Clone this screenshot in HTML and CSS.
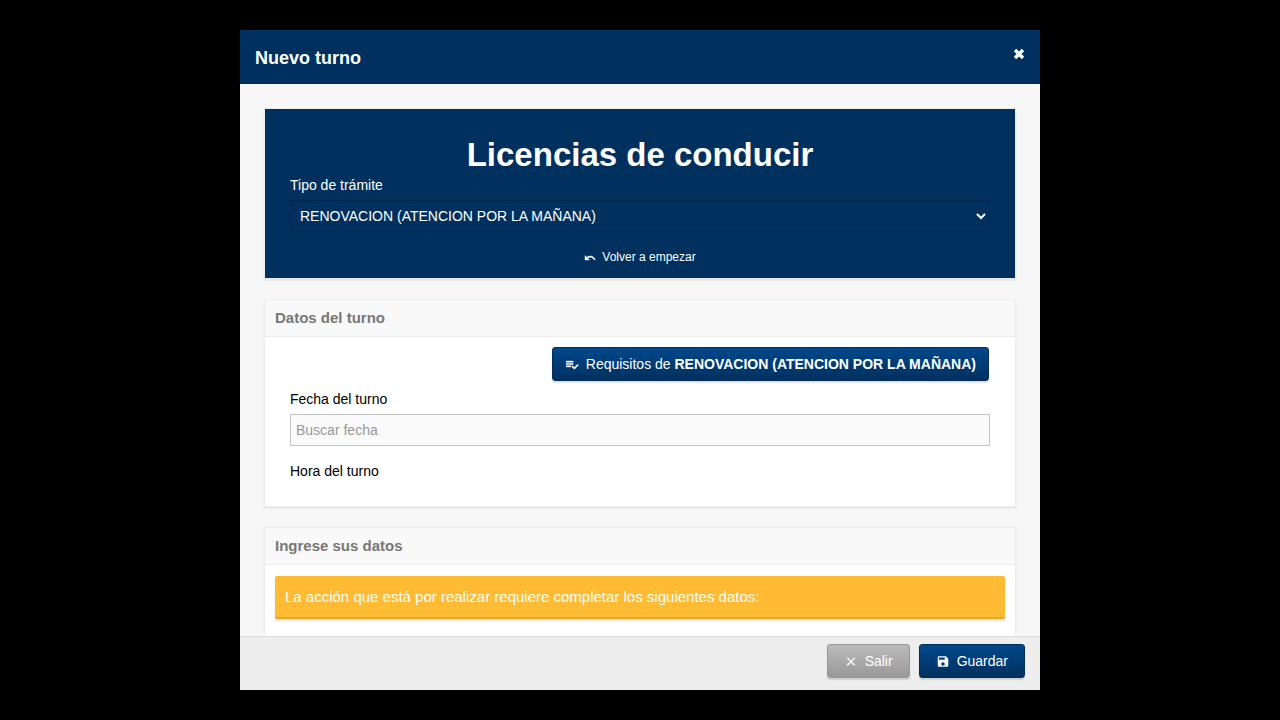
FILE: index.html
```html
<!DOCTYPE html>
<html lang="es">
<head>
<meta charset="utf-8">
<meta name="viewport" content="width=device-width, initial-scale=1">
<title>Nuevo turno</title>
<link rel="stylesheet" href="styles.css">
</head>
<body class="page">
<form class="dialog" role="dialog" aria-labelledby="dialog-title">
  <header class="dialog-header">
    <h1 class="dialog-title" id="dialog-title">Nuevo turno</h1>
    <button class="close" type="button" aria-label="Cerrar">
      <svg class="close-icon" viewBox="0 0 12 12" aria-hidden="true"><path d="M2 2L10 10M10 2L2 10" stroke="currentColor" stroke-width="3.4"/></svg>
    </button>
  </header>
  <main class="dialog-body">
    <section class="banner">
      <h2 class="banner-title">Licencias de conducir</h2>
      <label class="label" for="tramite">Tipo de trámite</label>
      <select class="select" id="tramite">
        <option>RENOVACION (ATENCION POR LA MAÑANA)</option>
      </select>
      <button class="restart" type="button">
        <svg class="icon restart-icon" viewBox="0 0 24 24" aria-hidden="true"><path fill="currentColor" stroke="currentColor" stroke-width=".8" d="M12.500 10c-2.650 0-5.050.99-6.900 2.600L2 9v9h9l-3.620-3.620c1.390-1.160 3.160-1.880 5.120-1.880 3.540 0 6.550 2.310 7.600 5.500l2.370-.78C21.080 13.030 17.150 10 12.500 10z"/></svg>
        Volver a empezar
      </button>
    </section>

    <section class="card">
      <h2 class="card-title">Datos del turno</h2>
      <div class="card-content">
        <button class="button primary requirements" type="button">
          <svg class="icon" viewBox="0 0 24 24" aria-hidden="true"><path fill="currentColor" stroke="currentColor" stroke-width=".8" d="M14 11H2v2h12v-2zm0-4H2v2h12V7zM2 17h8v-2H2v2zm19.500-4.500L23 14l-6.990 7-4.510-4.500L13 15l3.010 3 5.490-5.500z"/></svg>
          <span>Requisitos de <b>RENOVACION (ATENCION POR LA MAÑANA)</b></span>
        </button>
        <label class="label" for="fecha">Fecha del turno</label>
        <input class="input" id="fecha" type="text" placeholder="Buscar fecha">
        <p class="label time-label">Hora del turno</p>
      </div>
    </section>

    <section class="card">
      <h2 class="card-title">Ingrese sus datos</h2>
      <div class="card-notice">
        <p class="notice">La acción que está por realizar requiere completar los siguientes datos:</p>
      </div>
    </section>
  </main>
  <footer class="dialog-footer">
    <button class="button secondary" type="button">
      <svg class="icon" viewBox="0 0 24 24" aria-hidden="true"><path fill="currentColor" stroke="currentColor" stroke-width=".4" d="M19 7.410L17.590 6 12 11.590 6.410 6 5 7.410 10.590 13 5 18.590 6.410 20 12 14.410 17.590 20 19 18.590 13.410 13z"/></svg>
      Salir
    </button>
    <button class="button primary" type="submit">
      <svg class="icon" viewBox="0 0 24 24" aria-hidden="true"><path fill="currentColor" d="M17 4H5c-1.110 0-2 .9-2 2v14c0 1.100.89 2 2 2h14c1.100 0 2-.9 2-2V8l-4-4zm-5 16c-1.660 0-3-1.340-3-3s1.340-3 3-3 3 1.340 3 3-1.340 3-3 3zm3-10H5V6h10v4z"/></svg>
      Guardar
    </button>
  </footer>
</form>
</body>
</html>
```
FILE: styles.css
```css
*, *::before, *::after { box-sizing: border-box; }

.page {
  margin: 0;
  height: 100vh;
  padding: 30px 16px;
  background: #000;
  color: #000;
  font: 14px/20px "Liberation Sans", Arial, sans-serif;
}

.dialog {
  display: flex;
  flex-direction: column;
  max-width: 800px;
  height: 100%;
  margin: 0 auto;
  background: #f7f7f7;
}

.dialog-header {
  display: flex;
  justify-content: space-between;
  align-items: flex-start;
  padding: 16px 15px 14px;
  background: #00305e;
  color: #fff;
}

.dialog-title {
  margin: 0;
  font-size: 18px;
  line-height: 24px;
}

.close {
  display: flex;
  padding: 2px 0;
  border: 0;
  background: none;
  color: inherit;
  cursor: pointer;
}

.close-icon { width: 12px; height: 12px; }

.dialog-body {
  flex: 1;
  min-height: 0;
  overflow-y: auto;
  scrollbar-width: none;
  padding: 24px;
}

.banner {
  display: flex;
  flex-direction: column;
  margin-bottom: 20px;
  padding: 26px 25px 11px;
  border: 1px solid #ececec;
  background: #00305e;
  background-clip: padding-box;
  box-shadow: 0 2px 2px rgba(0, 0, 0, .06);
  color: #fff;
}

.banner-title {
  margin: 0;
  font-size: 33px;
  line-height: 40px;
  text-align: center;
}

.label { display: block; margin: 0 0 5px; }

.select {
  width: 100%;
  height: 32px;
  padding: 0 6px 0 5px;
  border: 1px solid #00264b;
  border-radius: 0;
  background: #00305e;
  color: #fff;
  font: inherit;
}

.restart {
  display: flex;
  align-items: center;
  align-self: center;
  gap: 6px;
  margin-top: 15px;
  padding: 0;
  border: 0;
  background: none;
  color: inherit;
  font: 12px/20px "Liberation Sans", Arial, sans-serif;
  cursor: pointer;
}

.card {
  margin-bottom: 20px;
  border: 1px solid #ececec;
  background: #fff;
  box-shadow: 0 2px 2px rgba(0, 0, 0, .06);
}

.card-title {
  margin: 0;
  padding: 7px 10px 8px;
  border-bottom: 1px solid #ececec;
  background: #f9f9f9;
  color: #777;
  font-size: 15px;
  line-height: 21px;
}

.card-content {
  display: flex;
  flex-direction: column;
  padding: 10px 25px 20px;
}

.button {
  display: flex;
  align-items: center;
  height: 34px;
  border: 1px solid;
  border-radius: 3px;
  box-shadow: 0 2px 1px rgba(0, 0, 0, .12);
  padding: 0 16px;
  gap: 7px;
  color: #fff;
  font: inherit;
  cursor: pointer;
}

.primary {
  border-color: #002d5a;
  background: linear-gradient(#00488c, #00305e);
}

.secondary {
  border-color: #999;
  background: linear-gradient(#bbb, #999);
}

.requirements {
  align-self: flex-end;
  margin: 0 1px 8px;
  padding: 0 12px;
}

.icon { width: 14px; height: 14px; flex: none; }
.restart-icon { width: 12px; height: 12px; }

.input {
  width: 100%;
  height: 32px;
  padding: 0 5px;
  border: 1px solid #c4c4c4;
  background: #fafafa;
  color: #333;
  font: inherit;
}

.input::placeholder { color: #999; opacity: 1; }

.time-label { margin-top: 15px; }

.card-notice { padding: 11px 10px 40px; }

.notice {
  margin: 0;
  padding: 10px;
  border-bottom: 2px solid #e5a82e;
  border-radius: 2px;
  background: #fb3;
  box-shadow: 0 2px 2px rgba(0, 0, 0, .12);
  color: #fff;
  font-size: 15px;
  line-height: 21px;
}

.dialog-footer {
  display: flex;
  justify-content: flex-end;
  gap: 9px;
  padding: 7px 15px 12px;
  border-top: 1px solid #ddd;
  background: #ededed;
}
```
